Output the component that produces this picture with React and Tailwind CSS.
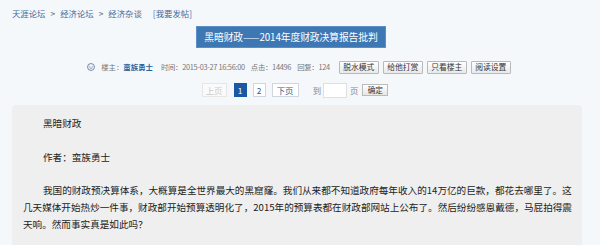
const font = { fontFamily: '"Noto Sans CJK SC", "Noto Sans", sans-serif' };

const MetaButton = ({ children }) => (
  <button className="h-[13px] w-[40px] flex items-center justify-center border border-[#b9b9b9] rounded-[1px] bg-gradient-to-b from-white to-[#e9e9e9] text-[7.8px] text-[#333]">
    {children}
  </button>
);

const Smile = () => (
  <svg width="8" height="8" viewBox="0 0 10 10" className="mr-[6px]">
    <circle cx="5" cy="5" r="4.3" fill="none" stroke="#5a6d9a" strokeWidth="1" />
    <circle cx="3.5" cy="4" r="0.6" fill="#5a6d9a" />
    <circle cx="6.5" cy="4" r="0.6" fill="#5a6d9a" />
    <path d="M3.1 5.9 Q5 7.6 6.9 5.9" fill="none" stroke="#5a6d9a" strokeWidth="0.9" />
  </svg>
);

export default function App() {
  return (
    <div className="w-[600px] h-[245px] overflow-hidden bg-[#f5f8fa]" style={font}>
      {/* breadcrumb */}
      <div className="flex items-center h-[26px] pl-[12px] text-[8.4px] text-[#3a6aa0]">
        <span>天涯论坛</span>
        <span className="mx-[5px] text-[#666]">&gt;</span>
        <span>经济论坛</span>
        <span className="mx-[5px] text-[#666]">&gt;</span>
        <span>经济杂谈</span>
        <span className="ml-[11px]">[我要发帖]</span>
      </div>

      {/* title */}
      <div className="flex justify-center pr-[18px]">
        <div className="h-[22px] px-[7px] flex items-center bg-[#3e78b4] border border-[#5b8ec4] text-white text-[9.8px] tracking-[-0.1px]">
          黑暗财政——2014年度财政决算报告批判
        </div>
      </div>

      {/* meta */}
      <div className="flex items-center justify-center h-[14px] mt-[12px] pr-[2px] text-[7.4px] text-[#777]">
        <Smile />
        <span>楼主：</span>
        <span className="text-[#2d5f9a] font-bold mr-[8px]">蛮族勇士</span>
        <span className="mr-[6px] tracking-[-0.3px]">时间：2015-03-27 16:56:00</span>
        <span className="mr-[6px] tracking-[-0.3px]">点击：14496</span>
        <span className="mr-[9px] tracking-[-0.3px]">回复：124</span>
        <div className="flex gap-[4px]">
          <MetaButton>脱水模式</MetaButton>
          <MetaButton>给他打赏</MetaButton>
          <MetaButton>只看楼主</MetaButton>
          <MetaButton>阅读设置</MetaButton>
        </div>
      </div>

      {/* pagination */}
      <div className="flex items-center justify-center h-[14px] mt-[9px] pr-[10px] text-[8.4px]">
        <span className="h-[14px] w-[25px] flex items-center justify-center border border-[#e6e6e6] bg-[#fafafa] text-[#ccc]">上页</span>
        <span className="h-[14px] w-[13px] ml-[7px] flex items-center justify-center bg-[#1a58a4] text-white">1</span>
        <span className="h-[14px] w-[13px] ml-[6px] flex items-center justify-center border border-[#cfd6e0] bg-white text-[#2d5f9a]">2</span>
        <span className="h-[14px] w-[27px] ml-[6px] flex items-center justify-center border border-[#cfd6e0] bg-white text-[#2d5f9a]">下页</span>
        <span className="ml-[14px] text-[#888]">到</span>
        <span className="h-[15px] w-[24px] ml-[2px] bg-white border border-[#e0e0e0]"></span>
        <span className="ml-[3px] text-[#888]">页</span>
        <button className="h-[12px] w-[26px] ml-[4px] flex items-center justify-center border border-[#bbb] bg-gradient-to-b from-white to-[#e6e6e6] text-[7.6px] text-[#333]">确定</button>
      </div>

      {/* content */}
      <div className="ml-[12px] w-[570px] mt-[8px] h-[200px] rounded-[4px] bg-[#efefef] pl-[11px] pr-[5px] pt-[10px] text-[9.6px] leading-[16.8px] text-[#222]">
        <p className="indent-[20px]">黑暗财政</p>
        <p className="h-[16.8px]"></p>
        <p className="indent-[20px]">作者：蛮族勇士</p>
        <p className="h-[16.8px]"></p>
        <p className="indent-[20px]">
          我国的财政预决算体系，大概算是全世界最大的黑窟窿。我们从来都不知道政府每年收入的14万亿的巨款，都花去哪里了。这几天媒体开始热炒一件事，财政部开始预算透明化了，2015年的预算表都在财政部网站上公布了。然后纷纷感恩戴德，马屁拍得震天响。然而事实真是如此吗？
        </p>
      </div>
    </div>
  );
}
